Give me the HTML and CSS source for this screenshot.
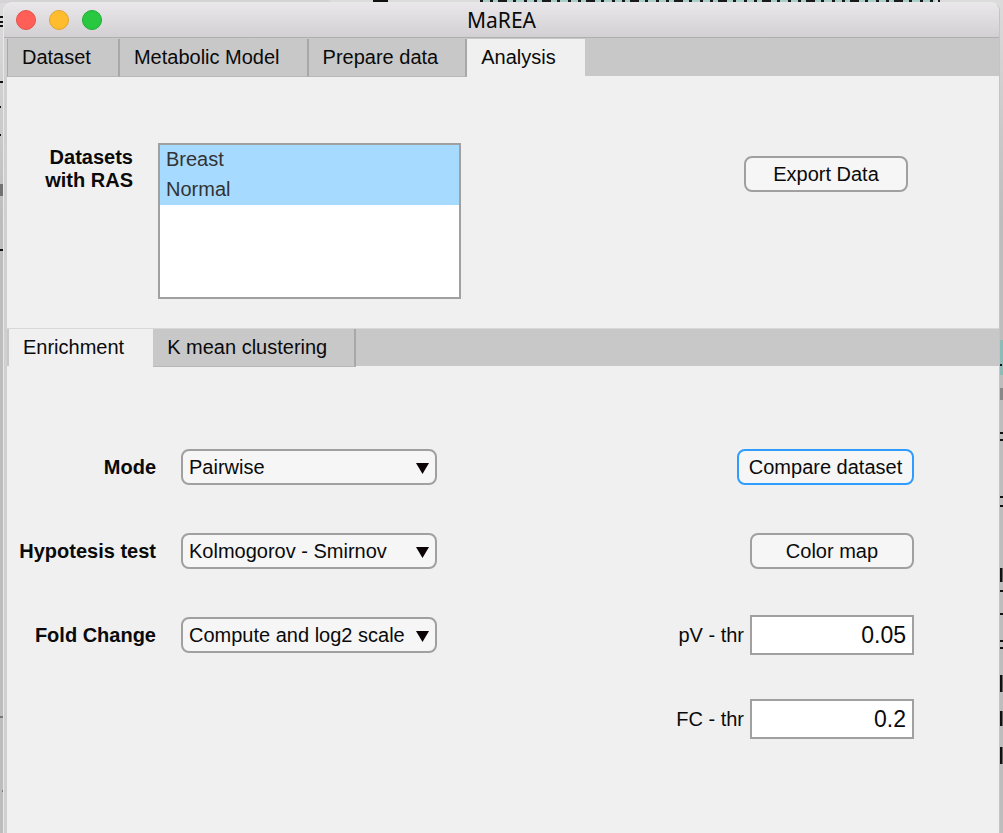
FILE: index.html
```html
<!DOCTYPE html>
<html lang="en">
<head>
<meta charset="utf-8">
<meta name="viewport" content="width=device-width, initial-scale=1">
<title>MaREA</title>
<link rel="stylesheet" href="styles.css">
</head>
<body>
<svg class="backdrop" aria-hidden="true">
  <rect x="0" y="0" width="330" height="3" fill="#d4d4d4"/>
  <rect x="373" y="0" width="15" height="2" fill="#111"/>
  <rect x="480" y="0" width="455" height="3" fill="#a9cdc9"/>
  <path d="M480 1H940" stroke="#1a1a1a" stroke-width="2" stroke-dasharray="3 7 3 5 9 6 3 8"/>
  <path d="M0 17h3M0 22h3M0 26h3M0 82h3M0 107h1M0 135h1M0 250h3" stroke="#111" stroke-width="2"/>
  <path d="M2 184v12M0 184v12" stroke="#222" stroke-width="1"/>
  <path d="M0 717h3M2 791h2" stroke="#777" stroke-width="2"/>
  <svg x="100%" overflow="visible">
    <rect x="-4" y="340" width="4" height="35" fill="#8dbbb7"/>
    <rect x="-4" y="388" width="4" height="12" fill="#888"/>
    <path d="M-3 365h2M-3 433h3M-3 440h3M-3 497h3M-3 506h3M-3 591h3M-3 614h3M-3 641h3M-3 648h3" stroke="#111" stroke-width="2"/>
    <path d="M-2 568v14M-2 675v17M-2 711v15M-2 747v17" stroke="#111" stroke-width="3"/>
  </svg>
</svg>
<main class="window">
  <header class="titlebar">
    <div class="lights">
      <button class="light close" aria-label="Close"></button>
      <button class="light minimize" aria-label="Minimize"></button>
      <button class="light maximize" aria-label="Zoom"></button>
    </div>
    <h1 class="title">MaREA</h1>
  </header>
  <div class="content">
    <nav class="tabs main-tabs" role="tablist" aria-label="Main">
      <button class="tab" role="tab" aria-selected="false">Dataset</button>
      <button class="tab" role="tab" aria-selected="false">Metabolic Model</button>
      <button class="tab" role="tab" aria-selected="false">Prepare data</button>
      <button class="tab" role="tab" aria-selected="true">Analysis</button>
    </nav>
    <section class="datasets">
      <label class="name datasets-label" for="datasets">Datasets<br>with RAS</label>
      <select class="listbox" id="datasets" multiple size="5">
        <option selected>Breast</option>
        <option selected>Normal</option>
      </select>
      <button class="button export">Export Data</button>
    </section>
    <nav class="tabs sub-tabs" role="tablist" aria-label="Analysis">
      <button class="tab" role="tab" aria-selected="true">Enrichment</button>
      <button class="tab" role="tab" aria-selected="false">K mean clustering</button>
    </nav>
    <section class="enrichment">
      <label class="name" for="mode">Mode</label>
      <div class="dropdown"><select id="mode"><option>Pairwise</option></select></div>
      <button class="button compare">Compare dataset</button>

      <label class="name" for="test">Hypotesis test</label>
      <div class="dropdown"><select id="test"><option>Kolmogorov - Smirnov</option></select></div>
      <button class="button colormap">Color map</button>

      <label class="name" for="fold">Fold Change</label>
      <div class="dropdown"><select id="fold"><option>Compute and log2 scale</option></select></div>
      <label class="threshold" for="pv">pV - thr</label>
      <input class="number" id="pv" type="text" inputmode="decimal" value="0.05">

      <label class="threshold" for="fc">FC - thr</label>
      <input class="number" id="fc" type="text" inputmode="decimal" value="0.2">
    </section>
  </div>
</main>
</body>
</html>
```
FILE: styles.css
```css
* { box-sizing: border-box; }

body {
  margin: 0;
  min-height: 100vh;
  display: flex;
  background: linear-gradient(#dcdcdc, #bdbdbd 220px);
  color: #0a0a0a;
  font: 20px/23px "Liberation Sans", Arial, sans-serif;
}

button, input, select { font: inherit; color: inherit; margin: 0; }

.backdrop {
  position: absolute;
  top: 0;
  left: 0;
  width: 100%;
  height: 100%;
}

.window {
  position: relative;
  flex: 1;
  display: flex;
  flex-direction: column;
  margin: 2px 3px 0 3px;
  border: 1px solid #e8e8e8;
  border-right-color: #c4c4c4;
  border-bottom: 0;
  border-radius: 9px 9px 0 0;
  background: #f0f0f0;
  overflow: hidden;
}

.titlebar {
  display: grid;
  grid-template-columns: 1fr auto 1fr;
  align-items: center;
  height: 35px;
  border-bottom: 1px solid #b0aeb0;
  background: linear-gradient(#e9e7e9, #d2d0d2);
}

.lights {
  display: flex;
  gap: 13px;
  padding-left: 12px;
}

.light {
  width: 20px;
  height: 20px;
  padding: 0;
  border: 1px solid;
  border-radius: 50%;
}
.close { background: #ff5f57; border-color: #e2524b; }
.minimize { background: #ffbd2e; border-color: #e0a32e; }
.maximize { background: #28c940; border-color: #1eaa32; }

.title {
  margin: 0;
  font: 400 21px/24px "Noto Sans", sans-serif;
}

.content {
  flex: 1;
  border-left: 3px solid #d0d0d0;
}

.tabs {
  display: flex;
  background: #c8c8c8;
  height: 38px;
}

.tab {
  margin-bottom: -1px;
  border: 0;
  border-right: 2px solid #a8a8a8;
  border-bottom: 1px solid #b8b8b8;
  background: #c8c8c8;
  padding: 0 27px 0 14px;
  text-align: left;
}
.tab[aria-selected="true"] {
  background: #f0f0f0;
  border-color: #f0f0f0;
}

.main-tabs { padding-top: 1px; }
.main-tabs .tab:first-child { border-left: 1px solid #a8a8a8; }
.sub-tabs {
  padding-left: 2px;
  border-top: 1px solid #d8d8d8;
}

.datasets {
  display: flex;
  align-items: flex-start;
  padding: 67px 91px 29px 0;
}
.name {
  font-weight: 700;
  text-align: right;
}
.datasets-label {
  width: 126px;
  margin: 3px 25px 0 0;
}

.listbox {
  width: 303px;
  height: 156px;
  padding: 0;
  border: 2px solid #a0a0a0;
  border-radius: 0;
  background: #fff;
  overflow: hidden;
  outline: 0;
}
.listbox option {
  min-height: 30px;
  padding: 3px 6px 4px;
  color: #333;
}
.listbox option:checked {
  background: #a6daff linear-gradient(#a6daff, #a6daff);
  color: #333;
  -webkit-text-fill-color: #333;
}

.button {
  width: 164px;
  height: 36px;
  padding: 0;
  border: 2px solid #a0a0a0;
  border-radius: 8px;
  background: #f6f6f6;
}
.export { margin: 13px 0 0 auto; }

.enrichment {
  display: grid;
  grid-template-columns: 149px 256px 1fr 164px;
  grid-auto-rows: 84px;
  align-items: center;
  padding: 59px 85px 20px 0;
}
.enrichment .name { grid-column: 1; }
.enrichment .compare,
.enrichment .colormap {
  grid-column: 3 / 5;
  justify-self: end;
}
.enrichment .compare {
  width: 177px;
  border-color: #2e9dff;
}

.dropdown {
  position: relative;
  margin-left: 25px;
  width: 256px;
}
.dropdown select {
  appearance: none;
  width: 100%;
  height: 36px;
  padding: 0 6px;
  border: 2px solid #a0a0a0;
  border-radius: 8px;
  background: #f6f6f6;
}
.dropdown::after {
  content: "";
  position: absolute;
  top: 14px;
  right: 8px;
  width: 13px;
  height: 11px;
  background: #0a0204;
  clip-path: polygon(0 0, 100% 0, 50% 100%);
  pointer-events: none;
}

.threshold {
  grid-column: 3;
  text-align: right;
  padding-right: 6px;
}
.number {
  grid-column: 4;
  width: 100%;
  height: 40px;
  padding: 0 6px;
  border: 2px solid #a0a0a0;
  border-radius: 0;
  background: #fff;
  font-size: 23px;
  text-align: right;
}
```
